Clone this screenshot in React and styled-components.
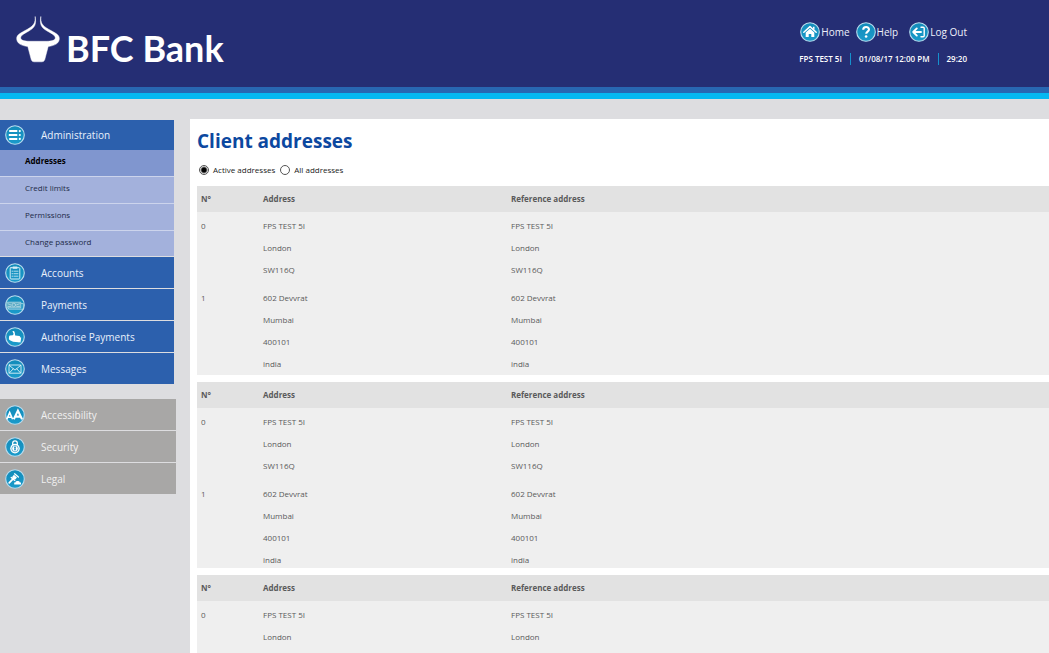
import React, { useState } from 'react';
import styled, { createGlobalStyle } from 'styled-components';

const GlobalStyle = createGlobalStyle`
  * { box-sizing: border-box; }
  body {
    margin: 0;
    background: #dddde0;
    color: #5a5a5b;
    font-family: "Open Sans", "Noto Sans", sans-serif;
    font-size: 8px;
  }
  ul { list-style: none; margin: 0; padding: 0; }
  a { color: inherit; text-decoration: none; }
`;

const Page = styled.div`
  display: flex;
  flex-direction: column;
  min-height: 100vh;
`;

const Header = styled.header`
  display: flex;
  justify-content: space-between;
  height: 99px;
  padding: 0 82px 0 16px;
  color: #fff;
  background: linear-gradient(#252e74 87px, #2867b2 87px, #2867b2 93px, #05b8f1 93px);
`;

const Brand = styled.a`
  display: flex;
  gap: 6px;
  padding-top: 16px;
  font: 700 36px/64px Lato, "Open Sans", sans-serif;
`;

const Tools = styled.div`
  padding-top: 22px;
`;

const Actions = styled.nav`
  display: flex;
  justify-content: flex-end;
  gap: 6px;
`;

const Action = styled.a`
  display: flex;
  align-items: center;
  gap: 1px;
  color: #eef1fa;
  font-size: 10px;
  line-height: 20px;
  &:last-child { margin-left: 5px; }
`;

const Session = styled.div`
  display: flex;
  margin-top: 11px;
  font-weight: 600;
  line-height: 12px;
`;

const SessionItem = styled.span`
  padding: 0 8px;
  & + & { border-left: 1px solid #1591cd; }
  &:first-child { padding-left: 0; }
  &:last-child { padding-right: 0; }
`;

const Body = styled.div`
  flex: 1;
  display: grid;
  grid-template-columns: 190px 1fr;
`;

const Sidebar = styled.aside`
  display: flex;
  flex-direction: column;
  gap: 15px;
  padding-top: 21px;
`;

const Menu = styled.ul`
  display: flex;
  flex-direction: column;
  gap: 1px;
  width: ${(p) => (p.$muted ? '176px' : '174px')};
`;

const MenuLink = styled.a`
  display: flex;
  align-items: center;
  gap: 16px;
  height: ${(p) => (p.$open ? '30px' : '31px')};
  padding-left: 5px;
  color: ${(p) => (p.$muted ? '#f0f0f0' : '#e9f0fb')};
  background: ${(p) => (p.$muted ? '#a8a7a6' : '#2c60ad')};
  font-size: 10px;
`;

const SubLink = styled.a`
  display: block;
  height: 27px;
  padding: 5px 0 0 25px;
  color: ${(p) => (p.$active ? '#000' : '#222b48')};
  background: ${(p) => (p.$active ? '#8096cf' : '#a3b1dc')};
  border-bottom: 1px solid #ccd4ec;
  font-weight: ${(p) => (p.$active ? 700 : 400)};
  line-height: 12px;
  li:last-child > & { height: 25px; border-bottom: 0; }
`;

const Main = styled.main`
  margin-top: 20px;
  padding: 9px 0 0 7px;
  background: #fff;
`;

const Title = styled.h1`
  margin: 0;
  color: #0c48a0;
  font-size: 19px;
  font-weight: 700;
  line-height: 26px;
`;

const Filter = styled.fieldset`
  display: flex;
  gap: 5px;
  margin: 9px 0;
  padding: 0 2px;
  border: 0;
`;

const Choice = styled.label`
  display: flex;
  align-items: center;
  gap: 4px;
  color: #222;
  line-height: 14px;
`;

const Radio = styled.input`
  appearance: none;
  width: 10px;
  height: 10px;
  margin: 0;
  border: 1px solid #555;
  border-radius: 50%;
  background: #fff;
  &:checked { background: radial-gradient(circle, #000 2px, #fff 4px); }
`;

const Tables = styled.div`
  display: flex;
  flex-direction: column;
  gap: 7px;
`;

const AddressTable = styled.table`
  width: 100%;
  table-layout: fixed;
  border-collapse: collapse;
  background: #efefef;
`;

const HeadCell = styled.th`
  width: ${(p) => p.$width || 'auto'};
  height: 26px;
  padding: 0 4px;
  background: #e2e2e2;
  text-align: left;
  line-height: 14px;
`;

const Cell = styled.td`
  padding: 6px 4px;
  vertical-align: top;
  line-height: 16px;
  tr:last-child > & { padding-bottom: ${(p) => p.$end}; }
`;

const Stack = styled.div`
  display: flex;
  flex-direction: column;
  gap: 6px;
`;

const Disc = ({ children }) => (
  <svg width="20" height="20" viewBox="0 0 20 20" aria-hidden="true">
    <defs>
      <linearGradient id="disc" x1="0" y1="0" x2="0" y2="1">
        <stop offset="0" stopColor="#128bb9" />
        <stop offset="1" stopColor="#1b9bcb" />
      </linearGradient>
    </defs>
    <circle cx="10" cy="10" r="9.3" fill="url(#disc)" stroke="#b9dcee" strokeWidth="1.1" />
    {children}
  </svg>
);

const line = { fill: 'none', stroke: '#fff', strokeLinecap: 'round', strokeLinejoin: 'round' };

const icons = {
  home: (
    <g>
      <path d="M3.8 10.2 10 4.6l6.2 5.6" {...line} strokeWidth="1.5" />
      <path d="M5.7 10.6 10 6.8l4.3 3.8v4.5h-3v-3.2H8.7v3.2h-3z" fill="#fff" />
      <path d="M13 4.8h1.5v2.9L13 6.4z" fill="#fff" />
    </g>
  ),
  help: (
    <g>
      <path d="M7.2 7.7c0-3.6 5.8-3.6 5.8-.3 0 2.2-2.8 2.1-2.8 4.3" {...line} strokeWidth="2.1" strokeLinecap="butt" />
      <circle cx="10.1" cy="14.5" r="1.3" fill="#fff" />
    </g>
  ),
  logout: (
    <g>
      <path d="M4.2 10h7.8M7.8 6.4 4.2 10l3.6 3.6" {...line} strokeWidth="1.9" />
      <path d="M12 5.2h2.2q1 0 1 1v7.6q0 1-1 1H12" {...line} strokeWidth="1.4" />
    </g>
  ),
  admin: (
    <g fill="#fff">
      <path d="M4.2 5.1h8.1v2H4.2zM3.8 9h8.5v2H3.8zM4.2 12.9h8.1v2H4.2z" />
      <circle cx="14.8" cy="6.1" r="1.1" />
      <circle cx="14.8" cy="10" r="1.1" />
      <circle cx="14.8" cy="13.9" r="1.1" />
    </g>
  ),
  accounts: (
    <g>
      <rect x="5.2" y="4.7" width="9.6" height="11.3" rx=".8" {...line} stroke="#d5edf6" />
      <path d="M7.7 3.5h4.6v2.3H7.7z" fill="#d5edf6" />
      <path d="M7 8.2h1M9.2 8.2h3.8M7 10.7h1M9.2 10.7h3.8M7 13.2h1M9.2 13.2h3.8" {...line} stroke="#d5edf6" strokeWidth=".8" />
    </g>
  ),
  payments: (
    <g {...line} stroke="#b2d8e5" strokeWidth=".8">
      <path d="M1.5 7.2h14.3v5.7H1.5z" fill="#5facc5" />
      <path d="M3.5 13.2v1h14.8V8.6h-2.1M3 8.8l3 1.2M14.4 8.8l-2.7 1M3 11.5h3M11.7 11.5h2.8" />
      <circle cx="8.8" cy="10" r="1.8" />
    </g>
  ),
  approve: (
    <g fill="#fff">
      <path d="M7.4 4.3q1.8-.8 2.3 1.1l.5 3.2 4.2.5q1 .3.8 1.2l-.8 4.4q-.2.7-1.1.6l-5.2-.5-3.2-1.6q-1.1-.5-1-1.6l.2-2q.1-.9 1-1l2.6-.4 1-1.3z" />
      <path d="m13.6 10.2 2.6.4-.7 4.8-2.6-.4z" />
    </g>
  ),
  messages: (
    <g {...line} stroke="#e0f2f8" strokeWidth=".9">
      <rect x="4" y="6" width="12" height="8.2" rx=".5" />
      <path d="m4.2 6.3 5.8 4.8 5.8-4.8M4.3 14l4-4.2M15.7 14l-4-4.2" />
    </g>
  ),
  accessibility: (
    <g {...line} strokeLinecap="butt" strokeLinejoin="miter">
      <path d="m1.8 14.2 2.9-6.6 2.9 6.6M2.9 12.2h3.6" strokeWidth="1.6" />
      <path d="m8.8 14.2 4.1-8.6 4.1 8.6M10.3 11.6h5.1" strokeWidth="2.1" />
    </g>
  ),
  security: (
    <g>
      <path d="M7.7 8V6.1q0-2.3 2.3-2.3t2.3 2.3V8" {...line} strokeWidth="1.3" />
      <circle cx="10" cy="11.6" r="4.8" fill="#fff" />
      <circle cx="10" cy="11.6" r="3.2" fill="none" stroke="#1588bb" strokeWidth=".6" />
      <path d="M9.2 10.8a.9.9 0 1 1 1.6 0l-.3.4.4 2H9.1l.4-2z" fill="#1588bb" />
    </g>
  ),
  legal: (
    <g>
      <path d="M8.9 5.8 12 8.4l-2 2.4-3.1-2.6z" fill="#fff" />
      <path d="m9.6 4.8 3.8 3.2M6.2 8.4l3.6 3" {...line} strokeWidth="1.3" />
      <path d="M8.3 9.6 4.2 13.8" {...line} strokeWidth="1.7" />
      <path d="M10.4 13.6q0-1.5 1.5-1.5h1.4q1.5 0 1.5 1.5h1.2v1.9H9.2v-1.9z" fill="#fff" />
    </g>
  ),
};

const BullMark = () => (
  <svg width="44" height="48" viewBox="0 0 44 48" aria-hidden="true">
    <path
      fill="#fff"
      stroke="#fff"
      strokeWidth=".5"
      d="M19.2.5C19.4 7 18 9.5 11 13.5C4 17.3.7 18.8.7 22.6C.7 27 4.5 29.5 11.8 30.5L15.3 43.8Q16 45.8 18 45.8H26Q28 45.8 28.7 43.8L32.2 30.5C39.5 29.5 43.3 27 43.3 22.6C43.3 18.8 40 17.3 33 13.5C26 9.5 24.6 7 24.8.5C23.6 8.5 25 11.5 31.5 15.2C36.5 18 39.3 19.5 39.3 21.8C39.3 24.5 35 25.3 30.5 25.3H13.5C9 25.3 4.7 24.5 4.7 21.8C4.7 19.5 7.5 18 12.5 15.2C19 11.5 20.4 8.5 19.2.5Z"
    />
  </svg>
);

const actions = [['home', 'Home'], ['help', 'Help'], ['logout', 'Log Out']];
const session = ['FPS TEST 5I', '01/08/17 12:00 PM', '29:20'];
const adminPages = ['Addresses', 'Credit limits', 'Permissions', 'Change password'];
const sections = [
  ['admin', 'Administration'],
  ['accounts', 'Accounts'],
  ['payments', 'Payments'],
  ['approve', 'Authorise Payments'],
  ['messages', 'Messages'],
];
const extras = [['accessibility', 'Accessibility'], ['security', 'Security'], ['legal', 'Legal']];

const london = ['FPS TEST 5I', 'London', 'SW116Q'];
const mumbai = ['602 Devvrat', 'Mumbai', '400101', 'india'];
const groups = [
  { rows: [london, mumbai], end: '3px' },
  { rows: [london, mumbai], end: '0' },
  { rows: [london.slice(0, 2)], end: '8px' },
];

const Lines = ({ lines }) => (
  <Stack>
    {lines.map((text) => <span key={text}>{text}</span>)}
  </Stack>
);

export default function App() {
  const [filter, setFilter] = useState('Active addresses');
  return (
    <Page>
      <GlobalStyle />
      <Header>
        <Brand href="#home">
          <BullMark />
          BFC Bank
        </Brand>
        <Tools>
          <Actions>
            {actions.map(([icon, label]) => (
              <Action key={icon} href={`#${icon}`}><Disc>{icons[icon]}</Disc>{label}</Action>
            ))}
          </Actions>
          <Session>
            {session.map((text) => <SessionItem key={text}>{text}</SessionItem>)}
          </Session>
        </Tools>
      </Header>
      <Body>
        <Sidebar>
          <Menu>
            {sections.map(([icon, label]) => (
              <li key={icon}>
                <MenuLink href={`#${icon}`} $open={icon === 'admin'}><Disc>{icons[icon]}</Disc>{label}</MenuLink>
                {icon === 'admin' && (
                  <ul>
                    {adminPages.map((page, i) => (
                      <li key={page}><SubLink href="#admin" $active={i === 0}>{page}</SubLink></li>
                    ))}
                  </ul>
                )}
              </li>
            ))}
          </Menu>
          <Menu $muted>
            {extras.map(([icon, label]) => (
              <li key={icon}>
                <MenuLink href={`#${icon}`} $muted><Disc>{icons[icon]}</Disc>{label}</MenuLink>
              </li>
            ))}
          </Menu>
        </Sidebar>
        <Main>
          <Title>Client addresses</Title>
          <Filter>
            {['Active addresses', 'All addresses'].map((label) => (
              <Choice key={label}>
                <Radio type="radio" name="filter" checked={filter === label} onChange={() => setFilter(label)} />
                {label}
              </Choice>
            ))}
          </Filter>
          <Tables>
            {groups.map((group, g) => (
              <AddressTable key={g}>
                <thead>
                  <tr>
                    <HeadCell $width="62px">N°</HeadCell>
                    <HeadCell $width="248px">Address</HeadCell>
                    <HeadCell>Reference address</HeadCell>
                  </tr>
                </thead>
                <tbody>
                  {group.rows.map((lines, n) => (
                    <tr key={n}>
                      <Cell $end={group.end}>{n}</Cell>
                      <Cell $end={group.end}><Lines lines={lines} /></Cell>
                      <Cell $end={group.end}><Lines lines={lines} /></Cell>
                    </tr>
                  ))}
                </tbody>
              </AddressTable>
            ))}
          </Tables>
        </Main>
      </Body>
    </Page>
  );
}
